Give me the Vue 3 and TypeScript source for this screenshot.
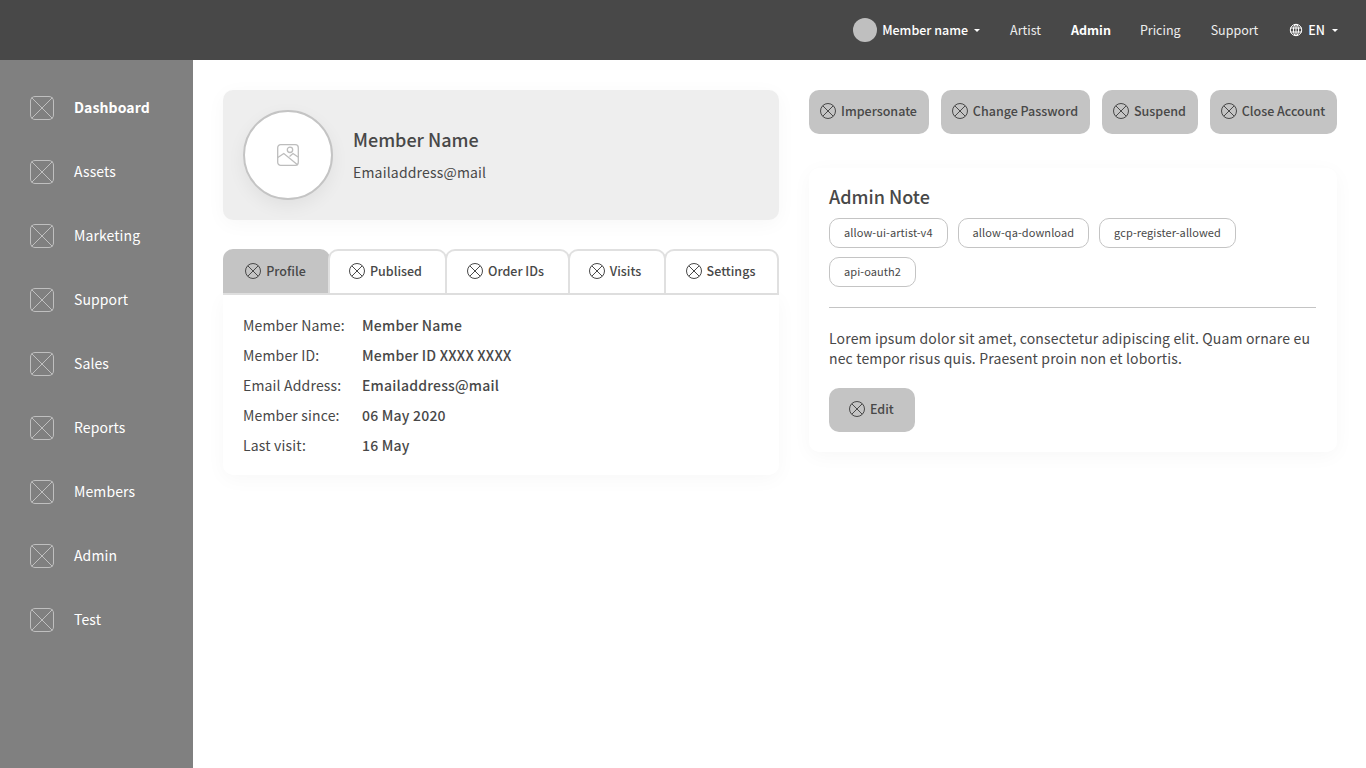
<script setup lang="ts">
const nav: string[] = ['Dashboard', 'Assets', 'Marketing', 'Support', 'Sales', 'Reports', 'Members', 'Admin', 'Test']
const tabs: string[] = ['Profile', 'Publised', 'Order IDs', 'Visits', 'Settings']
const actions: string[] = ['Impersonate', 'Change Password', 'Suspend', 'Close Account']
const tags: string[] = ['allow-ui-artist-v4', 'allow-qa-download', 'gcp-register-allowed', 'api-oauth2']
const rows: [string, string][] = [
  ['Member Name:', 'Member Name'],
  ['Member ID:', 'Member ID XXXX XXXX'],
  ['Email Address:', 'Emailaddress@mail'],
  ['Member since:', '06 May 2020'],
  ['Last visit:', '16 May'],
]
</script>

<template>
  <div class="page">
    <header class="top">
      <div class="user"><span class="avatar"></span><b class="semi">Member name</b><i class="caret"></i></div>
      <a class="link">Artist</a>
      <a class="link active">Admin</a>
      <a class="link">Pricing</a>
      <a class="link">Support</a>
      <div class="lang">
        <svg width="14" height="14" viewBox="0 0 14 14" fill="none" stroke="#fff" stroke-width="1">
          <circle cx="7" cy="7" r="5.7" />
          <ellipse cx="7" cy="7" rx="2.6" ry="5.7" />
          <path d="M1.3 5h11.4M1.3 9h11.4M7 1.3v11.4" />
        </svg>
        <b class="semi">EN</b><i class="caret"></i>
      </div>
    </header>
    <div class="body">
      <aside class="side">
        <div v-for="(n, i) in nav" :key="n" class="nav" :class="{ on: i === 0 }">
          <svg width="24" height="24" viewBox="0 0 24 24" fill="none" stroke="#bfbfbf" stroke-width="1">
            <rect x="0.5" y="0.5" width="23" height="23" rx="4.5" />
            <path d="M1.5 1.5l21 21M22.5 1.5l-21 21" />
          </svg>
          <span>{{ n }}</span>
        </div>
      </aside>
      <main class="main">
        <section class="left">
          <div class="hero">
            <div class="photo">
              <svg width="22" height="22" viewBox="0 0 22 22" fill="none" stroke="#bdbdbd" stroke-width="1.3">
                <rect x="0.7" y="0.7" width="20.6" height="20.6" rx="3" />
                <circle cx="13" cy="5.8" r="2.7" />
                <path d="M0.8 13.5l6-4 14 11.5M12.5 12.5l3.5-3 5 3.5" />
              </svg>
            </div>
            <div class="who">
              <div class="name">Member Name</div>
              <div class="mail">Emailaddress@mail</div>
            </div>
          </div>
          <div class="tabs">
            <div v-for="(t, i) in tabs" :key="t" class="tab" :class="{ sel: i === 0 }">
              <svg class="x" width="16" height="16" viewBox="0 0 16 16" fill="none" stroke="#484848" stroke-width="1">
                <circle cx="8" cy="8" r="7.5" />
                <path d="M2.8 2.8l10.4 10.4M13.2 2.8L2.8 13.2" />
              </svg>
              <span>{{ t }}</span>
            </div>
          </div>
          <div class="panel">
            <div v-for="r in rows" :key="r[0]" class="row">
              <span class="label">{{ r[0] }}</span>
              <span class="value">{{ r[1] }}</span>
            </div>
          </div>
        </section>
        <section class="right">
          <div class="actions">
            <button v-for="a in actions" :key="a" class="btn">
              <svg class="x" width="16" height="16" viewBox="0 0 16 16" fill="none" stroke="#484848" stroke-width="1">
                <circle cx="8" cy="8" r="7.5" />
                <path d="M2.8 2.8l10.4 10.4M13.2 2.8L2.8 13.2" />
              </svg>
              <span>{{ a }}</span>
            </button>
          </div>
          <div class="note">
            <h2>Admin Note</h2>
            <div class="tags"><span v-for="t in tags" :key="t" class="tag">{{ t }}</span></div>
            <hr />
            <p>Lorem ipsum dolor sit amet, consectetur adipiscing elit. Quam ornare eu nec tempor risus quis. Praesent proin non et lobortis.</p>
            <button class="btn">
              <svg class="x" width="16" height="16" viewBox="0 0 16 16" fill="none" stroke="#484848" stroke-width="1">
                <circle cx="8" cy="8" r="7.5" />
                <path d="M2.8 2.8l10.4 10.4M13.2 2.8L2.8 13.2" />
              </svg>
              <span>Edit</span>
            </button>
          </div>
        </section>
      </main>
    </div>
  </div>
</template>

<style>
html, body { margin: 0; background: #fff; }
</style>

<style scoped>
.page { width: 1366px; height: 768px; overflow: hidden; display: flex; flex-direction: column; font-family: "Noto Sans CJK JP", "Noto Sans", sans-serif; font-size: 14px; color: #484848; }
.top { height: 60px; flex: none; background: #484848; color: #fff; display: flex; align-items: center; justify-content: flex-end; padding-right: 28px; font-size: 12.5px; }
.user { display: flex; align-items: center; }
.avatar { width: 24px; height: 24px; border-radius: 50%; background: #bfbfbf; margin-right: 5px; }
.semi { font-weight: 500; margin-bottom: 2px; }
.caret { width: 0; height: 0; border-left: 3px solid transparent; border-right: 3px solid transparent; border-top: 3px solid #fff; margin-left: 7px; }
.user .caret { margin-left: 6px; }
.link { margin-left: 30px; margin-bottom: 2px; color: #eee; }
.link.active { font-weight: 700; color: #fff; margin-right: -1px; }
.lang { display: flex; align-items: center; margin-left: 31px; }
.lang svg { margin-right: 5px; }
.body { flex: 1; display: flex; min-height: 0; }
.side { width: 193px; flex: none; background: #808080; padding-top: 36px; box-sizing: border-box; color: #fff; }
.nav { height: 24px; margin-bottom: 40px; padding-left: 30px; display: flex; align-items: center; gap: 20px; letter-spacing: 0.1px; }
.nav span { margin-bottom: 2px; }
.nav.on { font-weight: 700; }
.main { flex: 1; display: flex; gap: 30px; padding: 30px 29px 0 30px; align-items: flex-start; }
.left { width: 556px; flex: none; }
.right { width: 528px; flex: none; }
.hero { height: 130px; background: #eee; border-radius: 10px; display: flex; align-items: center; padding-left: 20px; gap: 20px; box-sizing: border-box; box-shadow: 0 4px 20px rgba(0, 0, 0, 0.035); }
.photo { width: 90px; height: 90px; box-sizing: border-box; border: 2px solid #c4c4c4; border-radius: 50%; background: #fff; display: flex; align-items: center; justify-content: center; box-shadow: 0 6px 18px rgba(0, 0, 0, 0.06); }
.who { padding-bottom: 3px; }
.name { font-size: 18px; font-weight: 500; line-height: 26px; }
.mail { line-height: 20px; margin-top: 10px; letter-spacing: 0.18px; }
.tabs { display: grid; grid-template-columns: 105px 117px 123px 96px 115px; margin-top: 29px; height: 46px; border-bottom: 2px solid #e0e0e0; box-sizing: border-box; }
.tab { display: flex; align-items: center; justify-content: center; gap: 5px; padding: 0 4px 2px 0; margin-right: -2px; border: 2px solid #e0e0e0; border-bottom: 0; border-radius: 10px 10px 0 0; font-weight: 500; font-size: 12.5px; background: #fff; white-space: nowrap; }
.tab span { margin-bottom: 2px; }
.tab:first-child { padding-right: 2px; }
.tab:last-child { margin-right: 0; padding-right: 2px; }
.tab.sel { background: #c4c4c4; border-color: #c4c4c4; }
.x { flex: none; }
.panel { padding: 15px 20px; background: #fff; border-radius: 0 0 10px 10px; box-shadow: 0 4px 20px rgba(0, 0, 0, 0.035); letter-spacing: 0.17px; }
.row { display: flex; height: 30px; align-items: center; }
.label { width: 119px; flex: none; }
.value { font-weight: 500; letter-spacing: 0.21px; }
.actions { display: grid; grid-template-columns: 120px 149px 96px 127px; gap: 12px; margin-bottom: 34px; }
.btn { height: 44px; padding: 0 1px 2px 0; border: 0; border-radius: 10px; background: #c4c4c4; color: #484848; font: inherit; font-size: 12.5px; font-weight: 500; display: inline-flex; align-items: center; justify-content: center; gap: 5px; white-space: nowrap; }
.btn span { margin-bottom: 2px; }
.note { padding: 15px 21px 20px 20px; background: #fff; border-radius: 10px; box-shadow: 0 4px 20px rgba(0, 0, 0, 0.035); }
h2 { margin: 0; font-size: 18px; font-weight: 500; line-height: 26px; }
.tags { display: flex; flex-wrap: wrap; gap: 9px 10px; margin-top: 9px; }
.tag { height: 30px; box-sizing: border-box; padding: 0 14px 2px; border: 1px solid #c4c4c4; border-radius: 10px; font-size: 11px; letter-spacing: 0.08px; display: flex; align-items: center; }
hr { border: 0; border-top: 1px solid #c4c4c4; margin: 20px 0; }
p { margin: 0 0 20px; line-height: 20px; letter-spacing: 0.15px; }
.note .btn { padding: 0 21px 2px 20px; }
</style>
